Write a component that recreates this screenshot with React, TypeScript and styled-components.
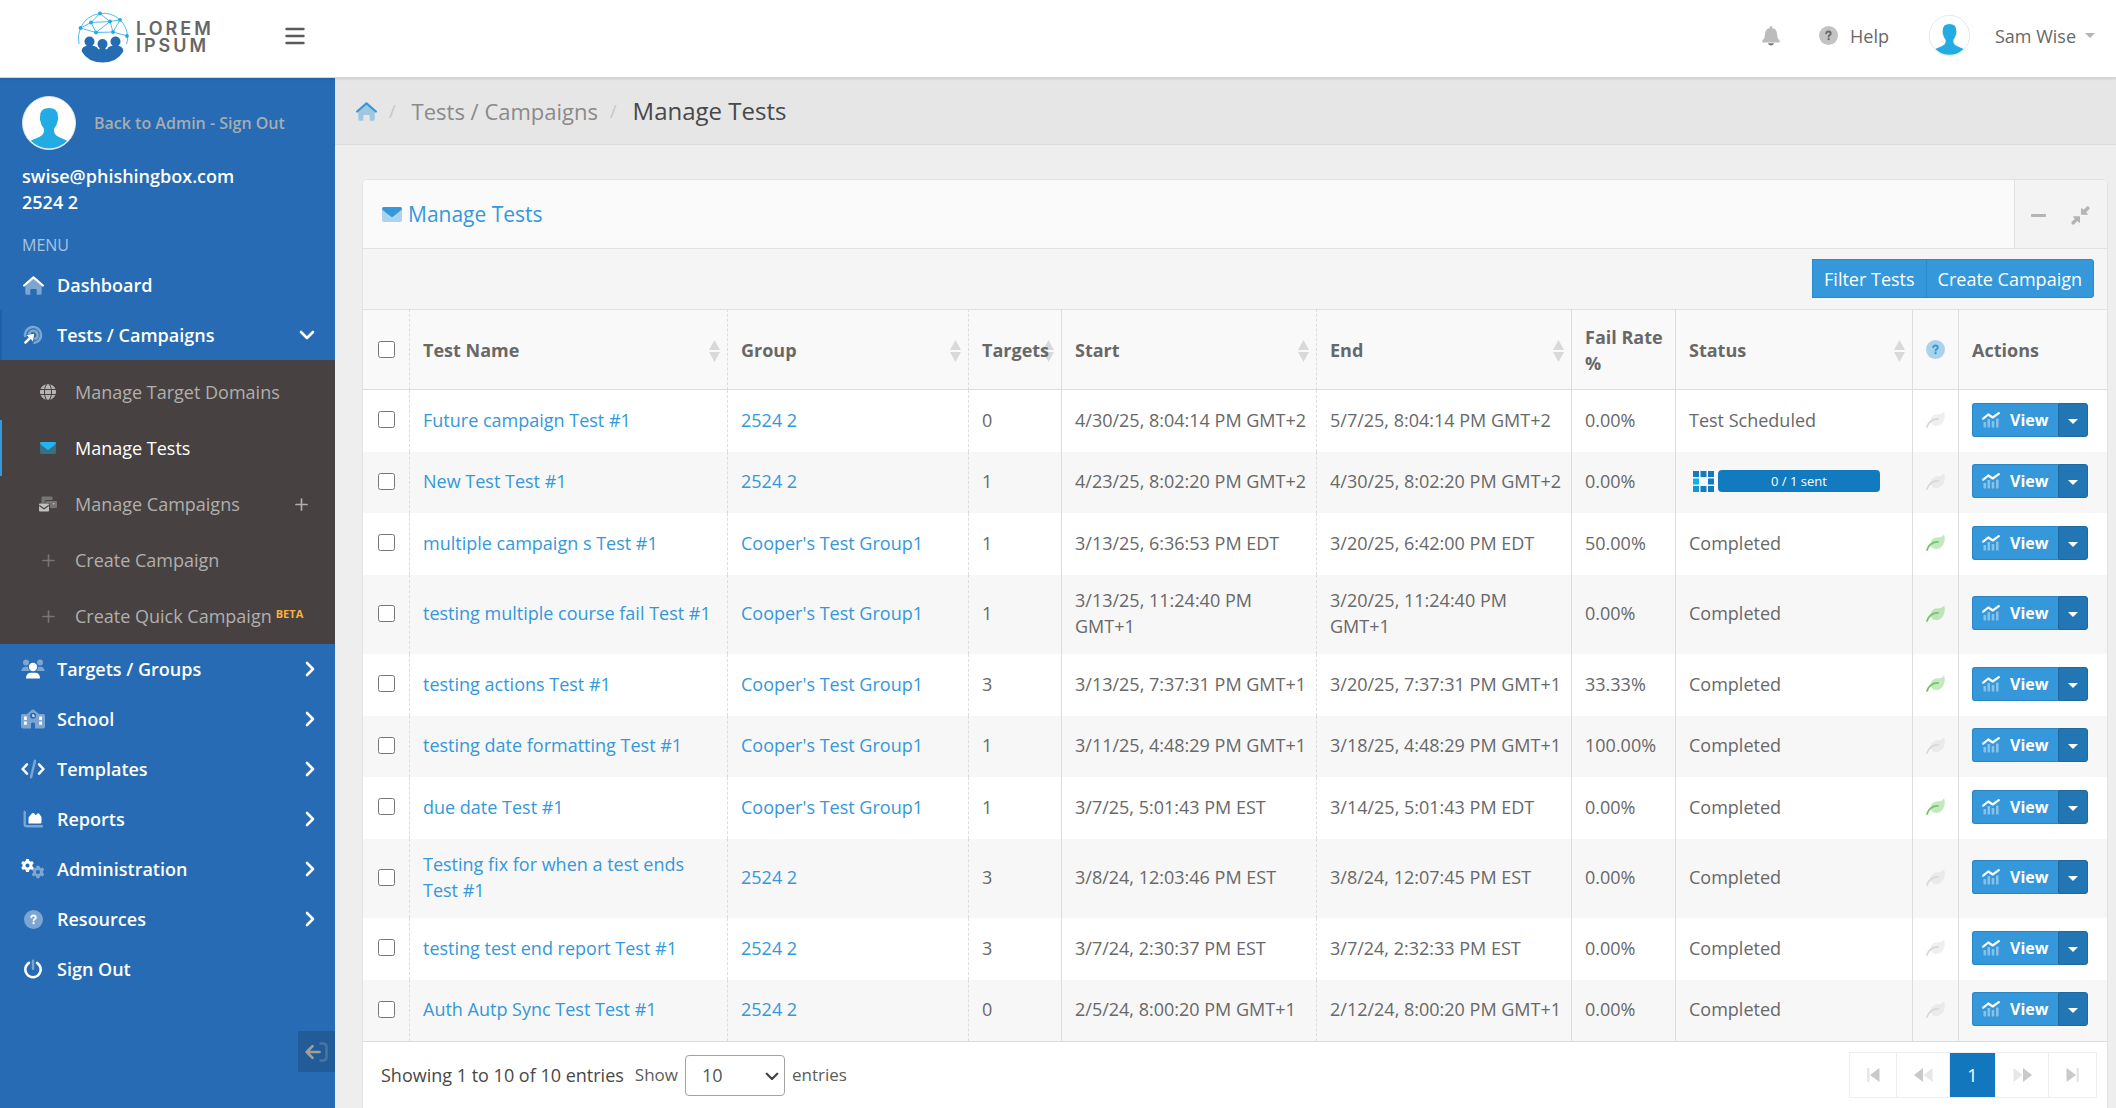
import React from "react";
import styled, { createGlobalStyle } from "styled-components";
import { FaGear, FaGlobe } from "react-icons/fa6";

const Global = createGlobalStyle`
  *, *::before, *::after { box-sizing: border-box; }
  body {
    margin: 0;
    background: #eeeeee;
    color: #686868;
    font-family: "Open Sans", "Noto Sans", sans-serif;
    font-size: 18px;
    line-height: 26px;
  }
  a { color: inherit; text-decoration: none; }
  button, select, input { font: inherit; margin: 0; }
  svg { display: block; flex: none; }
`;

/* ---------- Icons ---------- */

type IconProps = { size?: number };

const HouseIcon = ({ size = 21 }: IconProps) => (
  <svg width={size} height={size} viewBox="0 0 576 540" fill="currentColor" aria-hidden="true">
    <path opacity=".4" d="M64 280 288 84l224 196v200q0 46-46 46H376V390q0-26-26-26H226q-26 0-26 26v136h-90q-46 0-46-46z" />
    <path d="M32 270 288 46l256 224" fill="none" stroke="currentColor" strokeWidth="62" strokeLinecap="round" strokeLinejoin="round" />
  </svg>
);

const TargetIcon = () => (
  <svg width="20" height="20" viewBox="0 0 20 20" fill="none" aria-hidden="true">
    <g stroke="currentColor" strokeWidth="2.6" opacity=".4">
      <path d="M2.300 12A8 8 0 1 1 10.500 18" />
      <path d="M6 9.300A4.300 4.300 0 1 1 11.300 14.200" />
    </g>
    <path d="M11.200 8.800 10 16.400 7.700 14.100 3.200 18.600a1.300 1.300 0 0 1-1.800-1.800L5.900 12.300 3.600 10z" fill="currentColor" />
  </svg>
);

const UsersIcon = () => (
  <svg width="24" height="20" viewBox="0 0 24 20" fill="currentColor" aria-hidden="true">
    <g opacity=".4">
      <circle cx="5" cy="3.400" r="3" />
      <circle cx="19" cy="3.400" r="3" />
      <path d="M.5 12a4.300 4.300 0 0 1 4-4.300h2.300q.4 2.700 1.800 4.300zM23.500 12a4.300 4.300 0 0 0-4-4.300h-2.300q-.4 2.700-1.800 4.300z" />
    </g>
    <circle cx="12" cy="8" r="4.200" />
    <path d="M5 19.500q0-5.800 5-5.800h4q5 0 5 5.800z" />
  </svg>
);

const SchoolIcon = () => (
  <svg width="24" height="20" viewBox="0 0 24 20" fill="currentColor" aria-hidden="true">
    <path
      opacity=".4"
      fillRule="evenodd"
      d="M0 6.500Q0 5 1.500 5H6l5-4.300q1-.6 2 0L18 5h4.500Q24 5 24 6.500v11q0 2-2 2h-8V15q0-1.400-2-1.400T10 15v4.500H2q-2 0-2-2zM12 3.800a3 3 0 1 0 0 6 3 3 0 0 0 0-6z"
    />
    <path d="M3 7.500h2.800v3.400H3zM3 12.400h2.800v3.400H3zM18.200 7.500H21v3.400h-2.800zM18.200 12.400H21v3.400h-2.800z" />
    <path d="M12 5.200v2h1.700" fill="none" stroke="currentColor" strokeWidth="1.300" />
  </svg>
);

const CodeIcon = () => (
  <svg width="24" height="20" viewBox="0 0 24 20" fill="none" stroke="currentColor" strokeWidth="2.500" strokeLinecap="round" strokeLinejoin="round" aria-hidden="true">
    <path d="M6 5.300 1.600 10 6 14.700M18 5.300l4.400 4.700-4.400 4.700" />
    <path opacity=".4" d="M14 1.800 10 18.200" />
  </svg>
);

const ChartAreaIcon = () => (
  <svg width="20" height="20" viewBox="0 0 20 20" aria-hidden="true">
    <path opacity=".4" d="M1.700 3v12q0 2.300 2.300 2.300h15" fill="none" stroke="currentColor" strokeWidth="2.400" strokeLinecap="round" />
    <path d="M5.500 14.500V8.600L9 4.300q1-.8 2 0l1.700 1.900 1.800-1.600q.9-.6 1.700.2L18.500 8v5.300q0 1.200-1.200 1.200z" fill="currentColor" />
  </svg>
);

const GearsIcon = () => (
  <svg width="24" height="20" viewBox="0 0 24 20" aria-hidden="true">
    <FaGear size={13} x={0} y={0} />
    <g opacity=".4">
      <FaGear size={13} x={10.5} y={6.5} />
    </g>
  </svg>
);

const QuestionIcon = ({ size = 19 }: IconProps) => (
  <svg width={size} height={size} viewBox="0 0 20 20" fill="none" aria-hidden="true">
    <circle cx="10" cy="10" r="10" fill="currentColor" opacity=".4" />
    <path d="M7.600 7.700q.2-1.900 2.300-1.900 2.500 0 2.500 2.100 0 1.100-1.200 1.700-1.100.6-1.100 1.600" stroke="currentColor" strokeWidth="1.900" strokeLinecap="round" />
    <circle cx="10.100" cy="13.900" r="1.200" fill="currentColor" />
  </svg>
);

const PowerIcon = () => (
  <svg width="20" height="20" viewBox="0 0 20 20" fill="none" stroke="currentColor" strokeWidth="2.500" strokeLinecap="round" aria-hidden="true">
    <path d="M6 3.900a7.700 7.700 0 1 0 8 0" />
    <path opacity=".4" d="M10 1.800v8" />
  </svg>
);

const EnvelopeIcon = ({ size = 20 }: IconProps) => (
  <svg width={size} height={size * 0.75} viewBox="0 0 20 15" fill="currentColor" aria-hidden="true">
    <path opacity=".4" d="M0 2.500 10 10 20 2.500V13q0 2-2 2H2q-2 0-2-2z" />
    <path d="M1.600 0h16.800Q20 0 20 1.800q0 .8-.8 1.400l-8.300 6.600q-.9.600-1.800 0L.8 3.200Q0 2.600 0 1.800 0 0 1.600 0z" />
  </svg>
);

const MailboxIcon = () => (
  <svg width="18" height="16" viewBox="0 0 18 16" aria-hidden="true">
    <g fill="#777574">
      <path d="M3.500.5h9q1 0 1 1V4H7.500q-2 0-2 2v1h-3V1.500q0-1 1-1z" />
      <path fillRule="evenodd" d="M7.500 5h9.500q1 0 1 1v5q0 1-1 1h-6V9q0-2-2-2H6.500V6q0-1 1-1zM13.500 6.500V9H16V6.500z" />
    </g>
    <path d="M13.700 6.700h2v2h-2z" fill="#c0c0c0" />
    <path d="M1 7.500h8q1 0 1 1v6q0 1-1 1H1q-1 0-1-1v-6q0-1 1-1z" fill="#c0c0c0" />
    <path d="M.3 9.500 5 12.700l4.700-3.200" fill="none" stroke="#474241" strokeWidth="1.200" />
  </svg>
);

const PlusIcon = ({ size = 13 }: IconProps) => (
  <svg width={size} height={size} viewBox="0 0 13 13" fill="none" stroke="currentColor" strokeWidth="1.700" strokeLinecap="round" aria-hidden="true">
    <path d="M6.500 1v11M1 6.500h11" />
  </svg>
);

const ChevronRight = () => (
  <svg width="10" height="16" viewBox="0 0 10 16" fill="none" stroke="currentColor" strokeWidth="2.600" strokeLinecap="round" strokeLinejoin="round" aria-hidden="true">
    <path d="M2 2l6 6-6 6" />
  </svg>
);

const ChevronDown = ({ size = 16 }: IconProps) => (
  <svg width={size} height={size * 0.625} viewBox="0 0 16 10" fill="none" stroke="currentColor" strokeWidth="2.600" strokeLinecap="round" strokeLinejoin="round" aria-hidden="true">
    <path d="M2 2l6 6 6-6" />
  </svg>
);

const CollapseIcon = () => (
  <svg width="23" height="20" viewBox="0 0 23 20" fill="none" stroke="currentColor" strokeWidth="2.600" strokeLinecap="round" strokeLinejoin="round" aria-hidden="true">
    <path d="M14.500 10H2M7.500 4.200 1.700 10l5.800 5.800" />
    <path opacity=".35" d="M15.500 1.500H18q3.500 0 3.500 3.500v10q0 3.500-3.500 3.500h-2.500" />
  </svg>
);

const BellIcon = () => (
  <svg width="18" height="20" viewBox="0 0 18 20" aria-hidden="true">
    <path d="M9 0q1.200 0 1.200 1.300V2Q15 3 15 8.300q0 4 2.500 6.200.5.500.4 1.200-.2.800-1.100.8H1.200q-.9 0-1.100-.8-.1-.7.4-1.200Q3 12.300 3 8.300 3 3 7.800 2v-.7Q7.800 0 9 0z" fill="#bcbcbc" />
    <path d="M6 17.200h6q-.6 2.200-3 2.200t-3-2.200z" fill="#757575" />
  </svg>
);

const MenuIcon = () => (
  <svg width="20" height="18" viewBox="0 0 20 18" fill="none" stroke="#5a5a5a" strokeWidth="2.400" strokeLinecap="round" aria-hidden="true">
    <path d="M1.500 2h17M1.500 9h17M1.500 16h17" />
  </svg>
);

const CompressIcon = () => (
  <svg width="19" height="19" viewBox="0 0 19 19" fill="currentColor" aria-hidden="true">
    <path d="M10 8.800V2.800q0-1 1-.5l1.700 1.500L16 .5q.8-.6 1.500 0l.9.900q.6.700 0 1.500L15.100 6.200l1.600 1.600q.5 1-.5 1z" />
    <path d="M9 10.200v6q0 1-1 .5l-1.600-1.600L3 18.500q-.8.600-1.500 0l-.9-.9q-.6-.7 0-1.500L3.900 12.800 2.300 11.200q-.5-1 .5-1z" />
  </svg>
);

const ChartViewIcon = () => (
  <svg width="18" height="16" viewBox="0 0 18 16" aria-hidden="true">
    <g fill="#ffffff" opacity=".4">
      <rect x="1.500" y="10" width="2.600" height="5.500" rx=".6" />
      <rect x="5.500" y="7" width="2.600" height="8.500" rx=".6" />
      <rect x="9.700" y="9" width="2.600" height="6.500" rx=".6" />
      <rect x="14" y="6.500" width="2.600" height="9" rx=".6" />
    </g>
    <path d="M1.200 6.700 6.300 2.500l4.400 3L16.800 1.200" fill="none" stroke="#ffffff" strokeWidth="2.200" strokeLinecap="round" strokeLinejoin="round" />
  </svg>
);

const LeafIcon = () => (
  <svg width="19" height="17" viewBox="0 0 19 17" aria-hidden="true">
    <path opacity=".4" d="M18 .3q1.800 5.200-.4 9.800-2.700 5.400-8 5-2.700-.2-4.100-2.400Q3.200 7.600 7.300 4.600q2-1.400 5.200-1.300Q16.400 3.400 18 .3z" fill="currentColor" />
    <path d="M1 16Q3.600 8 12 7.900" fill="none" stroke="currentColor" strokeWidth="1.800" strokeLinecap="round" />
  </svg>
);

const Caret = ({ size = 10 }: IconProps) => (
  <svg width={size} height={size / 2} viewBox="0 0 10 5" fill="currentColor" aria-hidden="true">
    <path d="M0 0h10L5 5z" />
  </svg>
);

const SortIcon = () => (
  <svg width="11" height="22" viewBox="0 0 11 22" fill="#d9d9d9" aria-hidden="true">
    <path d="M5.500 0 11 10H0zM5.500 22 0 12h11z" />
  </svg>
);

const Silhouette = ({ size = 41 }: IconProps) => (
  <svg width={size} height={size} viewBox="0 0 54 54" aria-hidden="true">
    <defs>
      <clipPath id={`face-${size}`}>
        <circle cx="27" cy="27" r="25.500" />
      </clipPath>
    </defs>
    <circle cx="27" cy="27" r="26.500" fill="#ffffff" stroke="#dcdfe4" strokeWidth="1" />
    <path
      clipPath={`url(#face-${size})`}
      fill="#22ace3"
      d="M27 12q8.800 0 8.800 8 .9 2-.3 5.500-.5 4-3.300 7-.8 4.500 1.800 6.700 2.500 2 8 4 4 1.400 7 3.800V54H5v-7q3-2.400 7-3.800 5.500-2 8-4 2.600-2.200 1.800-6.700-2.800-3-3.300-7-1.200-3.500-.3-5.500 0-8 8.800-8z"
    />
  </svg>
);

const LogoMark = () => (
  <svg width="52" height="52" viewBox="0 0 52 52" aria-hidden="true">
    <g fill="none" stroke="#22ace3" strokeWidth=".8">
      <path d="M2 33A25 25 0 0 1 3.500 17 25 25 0 0 1 23 2.500a25 25 0 0 1 20 6.300A25 25 0 0 1 50.500 25q.3 4-.9 8" />
      <path d="M3.500 17 14 11.500 23 2.500l10 8 10-1.700M14 11.500l19-1M14 11.500l5 10 14-11 3 10.500-17 .5L3.500 17M43 8.800l-7 12.200 14.500 4" />
    </g>
    <g fill="#22ace3">
      <circle cx="3.500" cy="17" r="1.900" />
      <circle cx="14" cy="11.500" r="1.900" />
      <circle cx="23" cy="2.500" r="1.900" />
      <circle cx="33" cy="10.500" r="1.900" />
      <circle cx="43" cy="8.800" r="1.900" />
      <circle cx="19" cy="21.500" r="1.900" />
      <circle cx="36" cy="21" r="1.900" />
      <circle cx="50" cy="25" r="1.900" />
    </g>
    <g fill="#256cb3">
      <circle cx="12.500" cy="30.500" r="5" />
      <circle cx="38.500" cy="30.500" r="5" />
      <path d="M9.500 33h6v3h-6zM35.500 33h6v3h-6z" />
      <path d="M9 35h8q3 .2 4.500 3.300h8.500Q31.500 35.200 34 35h8q4.700 1 4.200 5.500Q40 51.500 25.500 51.500T4.800 40.500Q4.300 36 9 35z" />
      <circle cx="25.500" cy="33" r="6" fill="#ffffff" />
      <circle cx="25.500" cy="33" r="5" />
      <path d="M22.500 36h6v4h-6z" />
    </g>
  </svg>
);

const SendingIcon = () => (
  <svg width="21" height="21" viewBox="0 0 21 21" fill="#127abe" aria-hidden="true">
    <path d="M0 0h6v6H0zM7.500 0h6v6h-6zM15 0h6v6h-6zM15 7.500h6v6h-6zM15 15h6v6h-6zM7.500 15h6v6h-6z" />
    <path d="M0 7.500h6v6H0z" fill="#12b0e6" />
    <path d="M0 15h6v6H0z" fill="#1295d2" />
  </svg>
);

const StepIcon = ({ kind }: { kind: "first" | "prev" | "next" | "last" }) => {
  const flip = kind === "next" || kind === "last";
  const double = kind === "next" || kind === "prev";
  return (
    <svg width={double ? 19 : 13} height="14" viewBox={double ? "0 0 19 14" : "0 0 13 14"} fill="#c9c9c9" aria-hidden="true">
      <g transform={flip ? `translate(${double ? 19 : 13} 0) scale(-1 1)` : undefined}>
        {double ? (
          <>
            <path d="M9 0v14L0 7z" />
            <path d="M18.500 0v14l-9-7z" opacity=".45" />
          </>
        ) : (
          <>
            <path d="M12.500 0v14l-9.500-7z" />
            <path d="M0 0h2.500v14H0z" opacity=".45" />
          </>
        )}
      </g>
    </svg>
  );
};

/* ---------- Page frame ---------- */

const Page = styled.div`
  display: flex;
  flex-direction: column;
  min-height: 100vh;
`;

const TopBar = styled.header`
  display: flex;
  align-items: center;
  height: 78px;
  padding: 0 21px 6px 77px;
  background: #ffffff;
  border-bottom: 1px solid #d6d6d6;
  box-shadow: 0 1px 2px rgba(0, 0, 0, 0.12);
  z-index: 1;
`;

const Logo = styled.a`
  display: flex;
  align-items: center;
  gap: 7px;
  width: 208px;
  padding-top: 2px;
`;

const LogoText = styled.span`
  display: flex;
  flex-direction: column;
  font-family: Inter, "Open Sans", sans-serif;
  font-weight: 600;
  font-size: 18px;
  line-height: 17px;
  letter-spacing: 3px;
  color: #666666;
`;

const IconButton = styled.button`
  display: flex;
  padding: 0;
  border: 0;
  background: none;
  color: #b4b4b4;
  cursor: pointer;
`;

const TopActions = styled.nav`
  display: flex;
  align-items: center;
  margin-left: auto;
  font-weight: 500;
`;

const HelpLink = styled.a`
  display: flex;
  align-items: center;
  gap: 12px;
  margin: 0 40px 0 39px;
`;

const UserMenu = styled.button`
  display: flex;
  align-items: center;
  gap: 9px;
  padding: 0;
  border: 0;
  background: none;
  color: #686868;
  font-weight: 500;

  svg:first-child { margin-right: 16px; }
  svg:last-child { color: #b4b4b4; }
`;

const Body = styled.div`
  display: flex;
  flex: 1;
`;

/* ---------- Sidebar ---------- */

const Sidebar = styled.aside`
  display: flex;
  flex: none;
  flex-direction: column;
  width: 335px;
  background: #266bb3;
  color: #ffffff;
`;

const Profile = styled.div`
  padding: 18px 22px 0;
`;

const ProfileTop = styled.div`
  display: flex;
  align-items: center;
  gap: 18px;
  height: 54px;
  margin-bottom: 13px;
  color: #a7acb1;
  font-size: 16px;
  font-weight: 600;
`;

const Account = styled.div`
  font-weight: 600;
`;

const MenuTitle = styled.div`
  padding: 16px 22px 1px;
  font-size: 16px;
  line-height: 28px;
  font-weight: 500;
  color: #a8c4e1;
`;

const MenuItem = styled.a<{ $open?: boolean }>`
  display: flex;
  align-items: center;
  height: 50px;
  padding: 0 20px 0 19px;
  border-left: 2px solid ${(p) => (p.$open ? "#1f5fa6" : "transparent")};
  font-weight: 600;
`;

const MenuIconBox = styled.span`
  display: flex;
  justify-content: center;
  width: 24px;
  margin-right: 12px;
`;

const Trailing = styled.span`
  margin-left: auto;
`;

const SubMenu = styled.div`
  padding-top: 4px;
  background: #474241;
`;

const SubItem = styled.a<{ $active?: boolean }>`
  display: flex;
  align-items: center;
  height: 56px;
  padding: 0 27px 0 34px;
  border-left: 2px solid ${(p) => (p.$active ? "#3498db" : "transparent")};
  color: ${(p) => (p.$active ? "#ffffff" : "#b0afae")};
`;

const SubIconBox = styled.span<{ $tint: string }>`
  display: flex;
  justify-content: center;
  width: 24px;
  margin-right: 15px;
  color: ${(p) => p.$tint};
`;

const Beta = styled.sup`
  align-self: center;
  margin: 0 0 5px 4px;
  font-size: 11px;
  line-height: 12px;
  font-weight: 700;
  color: #fbb03b;
`;

const CollapseButton = styled.button`
  display: flex;
  align-items: center;
  justify-content: center;
  align-self: flex-end;
  width: 37px;
  height: 41px;
  margin: auto 0 37px;
  padding: 0;
  border: 0;
  background: #225c98;
  color: #a19f9e;
`;

/* ---------- Main column ---------- */

const Main = styled.main`
  flex: 1;
  min-width: 0;
`;

const Breadcrumb = styled.nav`
  display: flex;
  align-items: center;
  height: 67px;
  padding-left: 21px;
  background: #e6e6e6;
  border-bottom: 1px solid #dcdcdc;
  color: #8a8a8a;
  font-size: 22px;
  line-height: 32px;
`;

const Crumb = styled.a<{ $tone?: string }>`
  color: ${(p) => p.$tone || "inherit"};
`;

const Current = styled.span`
  color: #484848;
  font-size: 24px;
`;

const Slash = styled.span`
  margin: 0 16px 0 12px;
  color: #c8c8c8;
  font-size: 18px;
`;

const Card = styled.section`
  margin: 34px 8px 0 27px;
  border: 1px solid #e2e2e2;
  border-radius: 5px 5px 0 0;
  background: #ffffff;
  overflow: hidden;
`;

const CardHeader = styled.div`
  display: flex;
  justify-content: space-between;
  height: 69px;
  padding-left: 19px;
  background: #fafafa;
  border-bottom: 1px solid #e2e2e2;
`;

const CardTitle = styled.h1`
  display: flex;
  align-items: center;
  gap: 6px;
  margin: 0;
  color: #3498db;
  font-size: 21px;
  font-weight: 400;
`;

const CardTools = styled.div`
  display: flex;
  align-items: center;
  gap: 25px;
  padding: 3px 17px 0 16px;
  background: #f3f3f3;
  border-left: 1px solid #e2e2e2;
`;

const Dash = styled.span`
  width: 15px;
  height: 3px;
  border-radius: 1px;
  background: #b4b4b4;
`;

const Toolbar = styled.div`
  display: flex;
  justify-content: flex-end;
  padding: 10px 13px 11px;
  background: #f5f5f5;
`;

const ToolButton = styled.button`
  height: 39px;
  padding: 0 11px;
  border: 1px solid #2a89ca;
  background: #3498db;
  color: #ffffff;

  & + & {
    margin-left: -1px;
    border-radius: 0 3px 3px 0;
  }
`;

const Table = styled.table`
  width: 100%;
  table-layout: fixed;
  border-collapse: separate;
  border-spacing: 0;
`;

const Th = styled.th<{ $solid?: boolean }>`
  position: relative;
  height: 81px;
  padding: 0 6px 0 13px;
  border-top: 1px solid #e2e2e2;
  border-bottom: 1px solid #dddddd;
  border-right: 1px ${(p) => (p.$solid ? "solid" : "dashed")} #dddddd;
  background: #f9f9f9;
  text-align: left;
  font-weight: 700;

  &:last-child { border-right: 0; }
`;

const ThLabel = styled.span`
  position: relative;
  pointer-events: none;
`;

const SortButton = styled.button`
  position: absolute;
  top: 30px;
  right: 7px;
  padding: 0;
  border: 0;
  background: none;
`;

const Tr = styled.tr`
  height: 61px;
  background: #f7f7f7;

  &:nth-child(odd) {
    height: 62px;
    background: #ffffff;
  }
`;

const Td = styled.td<{ $solid?: boolean }>`
  padding: 12px 6px 15px 13px;
  border-right: 1px ${(p) => (p.$solid ? "solid" : "dashed")} #dddddd;

  &:last-child { border-right: 0; }
`;

const Center = styled.div<{ $tone?: string }>`
  display: flex;
  justify-content: center;
  margin-left: -7px;
  color: ${(p) => p.$tone || "inherit"};
`;

const Check = styled.input`
  width: 17px;
  height: 17px;
`;

const BlueLink = styled.a`
  color: #3498db;
`;

const Sending = styled.div`
  display: flex;
  align-items: center;
  gap: 4px;
  padding-left: 4px;
`;

const Progress = styled.div`
  width: 162px;
  height: 22px;
  border-radius: 4px;
  background: #127abe;
  color: #ffffff;
  font-size: 13px;
  line-height: 22px;
  font-weight: 500;
  text-align: center;
`;

const ButtonPair = styled.div`
  display: flex;
  height: 34px;
`;

const ViewButton = styled.button`
  display: flex;
  align-items: center;
  gap: 10px;
  width: 86px;
  padding: 0 0 0 9px;
  border: 1px solid #2a85c4;
  border-right: 0;
  border-radius: 3px 0 0 3px;
  background: #3498db;
  color: #ffffff;
  font-size: 16px;
  font-weight: 700;
`;

const DropButton = styled.button`
  display: flex;
  align-items: center;
  justify-content: center;
  width: 30px;
  padding: 3px 0 0;
  border: 1px solid #1d699f;
  border-radius: 0 3px 3px 0;
  background: #2176b3;
  color: #ffffff;
`;

const CardFooter = styled.div`
  display: flex;
  align-items: center;
  height: 67px;
  padding: 0 10px 0 18px;
  border-top: 1px solid #dddddd;
  color: #484848;
`;

const LengthLabel = styled.label`
  display: flex;
  align-items: center;
  gap: 7px;
  margin-left: 11px;
  color: #5c5c5c;
  font-size: 17px;
`;

const SelectBox = styled.span`
  position: relative;
  color: #444444;

  svg {
    position: absolute;
    top: 17px;
    right: 6px;
    pointer-events: none;
  }
`;

const Select = styled.select`
  width: 100px;
  height: 41px;
  padding: 0 16px;
  border: 1px solid #a3a3a3;
  border-radius: 4px;
  background: #ffffff;
  color: #555555;
  font-size: 18px;
  appearance: none;
`;

const Pager = styled.nav`
  display: flex;
  margin-left: auto;
  border: 1px solid #eeeeee;
`;

const PageButton = styled.button<{ $wide?: boolean; $current?: boolean }>`
  display: flex;
  align-items: center;
  justify-content: center;
  width: ${(p) => (p.$wide ? 53 : p.$current ? 46 : 47)}px;
  height: 44px;
  padding: 0;
  border: 0;
  border-right: 1px solid #eeeeee;
  background: ${(p) => (p.$current ? "#1277bc" : "#ffffff")};
  color: #ffffff;

  &:last-child { border-right: 0; }
`;

/* ---------- Data ---------- */

type Row = {
  name: string;
  group: string;
  targets: number;
  start: string;
  end: string;
  fail: string;
  status: string;
  sent?: string;
  leaf?: boolean;
};

const cooper = "Cooper's Test Group1";

const rows: Row[] = [
  { name: "Future campaign Test #1", group: "2524 2", targets: 0, start: "4/30/25, 8:04:14 PM GMT+2", end: "5/7/25, 8:04:14 PM GMT+2", fail: "0.00%", status: "Test Scheduled" },
  { name: "New Test Test #1", group: "2524 2", targets: 1, start: "4/23/25, 8:02:20 PM GMT+2", end: "4/30/25, 8:02:20 PM GMT+2", fail: "0.00%", status: "", sent: "0 / 1 sent" },
  { name: "multiple campaign s Test #1", group: cooper, targets: 1, start: "3/13/25, 6:36:53 PM EDT", end: "3/20/25, 6:42:00 PM EDT", fail: "50.00%", status: "Completed", leaf: true },
  { name: "testing multiple course fail Test #1", group: cooper, targets: 1, start: "3/13/25, 11:24:40 PM GMT+1", end: "3/20/25, 11:24:40 PM GMT+1", fail: "0.00%", status: "Completed", leaf: true },
  { name: "testing actions Test #1", group: cooper, targets: 3, start: "3/13/25, 7:37:31 PM GMT+1", end: "3/20/25, 7:37:31 PM GMT+1", fail: "33.33%", status: "Completed", leaf: true },
  { name: "testing date formatting Test #1", group: cooper, targets: 1, start: "3/11/25, 4:48:29 PM GMT+1", end: "3/18/25, 4:48:29 PM GMT+1", fail: "100.00%", status: "Completed" },
  { name: "due date Test #1", group: cooper, targets: 1, start: "3/7/25, 5:01:43 PM EST", end: "3/14/25, 5:01:43 PM EDT", fail: "0.00%", status: "Completed", leaf: true },
  { name: "Testing fix for when a test ends Test #1", group: "2524 2", targets: 3, start: "3/8/24, 12:03:46 PM EST", end: "3/8/24, 12:07:45 PM EST", fail: "0.00%", status: "Completed" },
  { name: "testing test end report Test #1", group: "2524 2", targets: 3, start: "3/7/24, 2:30:37 PM EST", end: "3/7/24, 2:32:33 PM EST", fail: "0.00%", status: "Completed" },
  { name: "Auth Autp Sync Test Test #1", group: "2524 2", targets: 0, start: "2/5/24, 8:00:20 PM GMT+1", end: "2/12/24, 8:00:20 PM GMT+1", fail: "0.00%", status: "Completed" },
];

const columns: { label: string; sort?: boolean; solid?: boolean }[] = [
  { label: "Test Name", sort: true },
  { label: "Group", sort: true },
  { label: "Targets", sort: true, solid: true },
  { label: "Start", sort: true },
  { label: "End", sort: true, solid: true },
  { label: "Fail Rate %", solid: true },
  { label: "Status", sort: true, solid: true },
];

const lowerMenu = [
  { label: "Targets / Groups", icon: <UsersIcon /> },
  { label: "School", icon: <SchoolIcon /> },
  { label: "Templates", icon: <CodeIcon /> },
  { label: "Reports", icon: <ChartAreaIcon /> },
  { label: "Administration", icon: <GearsIcon /> },
  { label: "Resources", icon: <QuestionIcon /> },
];

export default function App() {
  return (
    <Page>
      <Global />
      <TopBar>
        <Logo href="#">
          <LogoMark />
          <LogoText>
            <span>LOREM</span>
            <span>IPSUM</span>
          </LogoText>
        </Logo>
        <IconButton aria-label="Toggle menu">
          <MenuIcon />
        </IconButton>
        <TopActions>
          <IconButton aria-label="Notifications">
            <BellIcon />
          </IconButton>
          <HelpLink href="#">
            <QuestionIcon />
            Help
          </HelpLink>
          <UserMenu>
            <Silhouette size={41} />
            Sam Wise
            <Caret />
          </UserMenu>
        </TopActions>
      </TopBar>

      <Body>
        <Sidebar>
          <Profile>
            <ProfileTop>
              <Silhouette size={54} />
              <span>
                <a href="#">Back to Admin</a> - <a href="#">Sign Out</a>
              </span>
            </ProfileTop>
            <Account>
              swise@phishingbox.com
              <br />
              2524 2
            </Account>
          </Profile>
          <MenuTitle>MENU</MenuTitle>
          <MenuItem href="#">
            <MenuIconBox>
              <HouseIcon />
            </MenuIconBox>
            Dashboard
          </MenuItem>
          <MenuItem href="#" $open>
            <MenuIconBox>
              <TargetIcon />
            </MenuIconBox>
            Tests / Campaigns
            <Trailing>
              <ChevronDown />
            </Trailing>
          </MenuItem>
          <SubMenu>
            <SubItem href="#">
              <SubIconBox $tint="#b5b4b3">
                <FaGlobe size={16} />
              </SubIconBox>
              Manage Target Domains
            </SubItem>
            <SubItem href="#" $active>
              <SubIconBox $tint="#22b4f0">
                <EnvelopeIcon size={16} />
              </SubIconBox>
              Manage Tests
            </SubItem>
            <SubItem href="#">
              <SubIconBox $tint="#b5b4b3">
                <MailboxIcon />
              </SubIconBox>
              Manage Campaigns
              <Trailing>
                <PlusIcon />
              </Trailing>
            </SubItem>
            <SubItem href="#">
              <SubIconBox $tint="#777473">
                <PlusIcon />
              </SubIconBox>
              Create Campaign
            </SubItem>
            <SubItem href="#">
              <SubIconBox $tint="#777473">
                <PlusIcon />
              </SubIconBox>
              Create Quick Campaign
              <Beta>BETA</Beta>
            </SubItem>
          </SubMenu>
          {lowerMenu.map((item) => (
            <MenuItem href="#" key={item.label}>
              <MenuIconBox>{item.icon}</MenuIconBox>
              {item.label}
              <Trailing>
                <ChevronRight />
              </Trailing>
            </MenuItem>
          ))}
          <MenuItem href="#">
            <MenuIconBox>
              <PowerIcon />
            </MenuIconBox>
            Sign Out
          </MenuItem>
          <CollapseButton aria-label="Collapse sidebar">
            <CollapseIcon />
          </CollapseButton>
        </Sidebar>

        <Main>
          <Breadcrumb aria-label="Breadcrumb">
            <Crumb href="#" $tone="#3498db" aria-label="Home">
              <HouseIcon />
            </Crumb>
            <Slash>/</Slash>
            <Crumb href="#">Tests / Campaigns</Crumb>
            <Slash>/</Slash>
            <Current>Manage Tests</Current>
          </Breadcrumb>

          <Card>
            <CardHeader>
              <CardTitle>
                <EnvelopeIcon />
                Manage Tests
              </CardTitle>
              <CardTools>
                <IconButton aria-label="Minimize">
                  <Dash />
                </IconButton>
                <IconButton aria-label="Compress">
                  <CompressIcon />
                </IconButton>
              </CardTools>
            </CardHeader>
            <Toolbar>
              <ToolButton>Filter Tests</ToolButton>
              <ToolButton>Create Campaign</ToolButton>
            </Toolbar>

            <Table>
              <colgroup>
                <col width="47" />
                <col />
                <col width="241" />
                <col width="93" />
                <col width="255" />
                <col width="255" />
                <col width="104" />
                <col width="237" />
                <col width="46" />
                <col width="148" />
              </colgroup>
              <thead>
                <tr>
                  <Th>
                    <Center>
                      <Check type="checkbox" aria-label="Select all tests" />
                    </Center>
                  </Th>
                  {columns.map((c) => (
                    <Th key={c.label} $solid={c.solid}>
                      {c.sort && (
                        <SortButton aria-label={`Sort by ${c.label}`}>
                          <SortIcon />
                        </SortButton>
                      )}
                      <ThLabel>{c.label}</ThLabel>
                    </Th>
                  ))}
                  <Th $solid>
                    <Center $tone="#3498db">
                      <QuestionIcon />
                    </Center>
                  </Th>
                  <Th>Actions</Th>
                </tr>
              </thead>
              <tbody>
                {rows.map((r) => (
                  <Tr key={r.name}>
                    <Td>
                      <Center>
                        <Check type="checkbox" aria-label={`Select ${r.name}`} />
                      </Center>
                    </Td>
                    <Td>
                      <BlueLink href="#">{r.name}</BlueLink>
                    </Td>
                    <Td>
                      <BlueLink href="#">{r.group}</BlueLink>
                    </Td>
                    <Td $solid>{r.targets}</Td>
                    <Td>{r.start}</Td>
                    <Td $solid>{r.end}</Td>
                    <Td $solid>{r.fail}</Td>
                    <Td $solid>
                      {r.sent ? (
                        <Sending>
                          <SendingIcon />
                          <Progress>{r.sent}</Progress>
                        </Sending>
                      ) : (
                        r.status
                      )}
                    </Td>
                    <Td $solid>
                      <Center $tone={r.leaf ? "#6cc962" : "#d8d8d8"}>
                        <LeafIcon />
                      </Center>
                    </Td>
                    <Td>
                      <ButtonPair>
                        <ViewButton>
                          <ChartViewIcon />
                          View
                        </ViewButton>
                        <DropButton aria-label={`More actions for ${r.name}`}>
                          <Caret />
                        </DropButton>
                      </ButtonPair>
                    </Td>
                  </Tr>
                ))}
              </tbody>
            </Table>

            <CardFooter>
              Showing 1 to 10 of 10 entries
              <LengthLabel>
                Show
                <SelectBox>
                  <Select defaultValue="10">
                    <option>10</option>
                    <option>25</option>
                    <option>50</option>
                  </Select>
                  <ChevronDown size={14} />
                </SelectBox>
                entries
              </LengthLabel>
              <Pager aria-label="Pagination">
                <PageButton aria-label="First page">
                  <StepIcon kind="first" />
                </PageButton>
                <PageButton $wide aria-label="Previous page">
                  <StepIcon kind="prev" />
                </PageButton>
                <PageButton $current>1</PageButton>
                <PageButton $wide aria-label="Next page">
                  <StepIcon kind="next" />
                </PageButton>
                <PageButton aria-label="Last page">
                  <StepIcon kind="last" />
                </PageButton>
              </Pager>
            </CardFooter>
          </Card>
        </Main>
      </Body>
    </Page>
  );
}
